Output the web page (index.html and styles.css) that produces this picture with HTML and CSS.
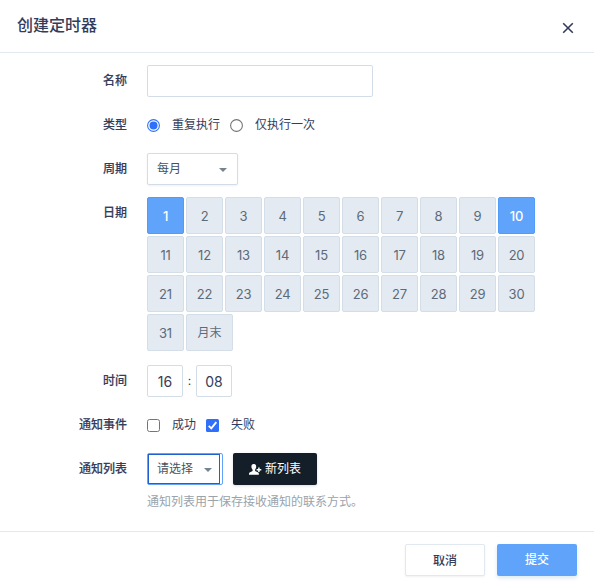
FILE: index.html
```html
<!DOCTYPE html>
<html lang="zh-CN">
<head>
<meta charset="utf-8">
<title>创建定时器</title>
<link rel="stylesheet" href="styles.css">
</head>
<body>
<div class="dialog">
  <header class="header">
    <h1 class="title">创建定时器</h1>
    <svg class="close" viewBox="0 0 12 12"><path d="M1.2 1.2 10.8 10.8M10.8 1.2 1.2 10.8" fill="none" stroke="#343c5b" stroke-width="1.6"/></svg>
  </header>
  <main class="form">
    <div class="row"><div class="label">名称</div><input class="name" type="text"></div>
    <div class="row">
      <div class="label">类型</div>
      <svg class="mark" viewBox="0 0 13 13"><circle cx="6.5" cy="6.5" r="5.9" fill="#fff" stroke="#2f73fb" stroke-width="1.1"/><circle cx="6.5" cy="6.5" r="4" fill="#2f6ffb"/></svg>
      <span class="option">重复执行</span>
      <svg class="mark" viewBox="0 0 13 13"><circle cx="6.5" cy="6.5" r="5.9" fill="#fff" stroke="#757575" stroke-width="1.1"/></svg>
      <span class="option">仅执行一次</span>
    </div>
    <div class="row">
      <div class="label">周期</div>
      <div class="select period"><span>每月</span><i class="caret"></i></div>
    </div>
    <div class="row dates">
      <div class="label">日期</div>
      <div class="days">
        <span class="day on">1</span><span class="day">2</span><span class="day">3</span><span class="day">4</span><span class="day">5</span><span class="day">6</span><span class="day">7</span><span class="day">8</span><span class="day">9</span><span class="day on">10</span>
        <span class="day">11</span><span class="day">12</span><span class="day">13</span><span class="day">14</span><span class="day">15</span><span class="day">16</span><span class="day">17</span><span class="day">18</span><span class="day">19</span><span class="day">20</span>
        <span class="day">21</span><span class="day">22</span><span class="day">23</span><span class="day">24</span><span class="day">25</span><span class="day">26</span><span class="day">27</span><span class="day">28</span><span class="day">29</span><span class="day">30</span>
        <span class="day">31</span><span class="day last">月末</span>
      </div>
    </div>
    <div class="row">
      <div class="label">时间</div>
      <span class="time">16</span><span class="colon">:</span><span class="time">08</span>
    </div>
    <div class="row">
      <div class="label">通知事件</div>
      <svg class="mark" viewBox="0 0 13 13"><rect x=".5" y=".5" width="12" height="12" rx="2" fill="#fff" stroke="#757575"/></svg>
      <span class="option">成功</span>
      <svg class="mark" viewBox="0 0 13 13"><rect width="13" height="13" rx="1.5" fill="#2f6ffb"/><path d="M2.7 6.8 5.3 9.4 10.3 3.2" fill="none" stroke="#fff" stroke-width="1.9"/></svg>
      <span class="option">失败</span>
    </div>
    <div class="row">
      <div class="label">通知列表</div>
      <div class="focus"><div class="select list"><span>请选择</span><i class="caret"></i></div></div>
      <button class="new"><svg class="user" viewBox="0 0 13 11"><path d="M4.6 0C6.5 0 7.3 1.2 7.2 3.1 7.1 4.4 6.6 5.1 6.1 5.7V7L9.2 8.4C9.8 8.8 9.9 9.5 9.9 10.7H0C0 9.5.1 8.8.7 8.4L3.6 7V5.7C3 5.1 2.5 4.4 2.4 3.1 2.3 1.2 3 0 4.6 0Z" fill="#fff"/><path d="M9.9 3.4V8M7.6 5.7H12.3" stroke="#fff" stroke-width="1.5"/></svg>新列表</button>
    </div>
    <p class="help">通知列表用于保存接收通知的联系方式。</p>
  </main>
  <footer class="footer">
    <button class="btn">取消</button>
    <button class="btn submit">提交</button>
  </footer>
</div>
</body>
</html>
```
FILE: styles.css
```css
* { box-sizing: border-box; }
body {
  margin: 0;
  background: #fff;
  color: #343c5b;
  font: 12px/18px Inter, "Noto Sans CJK SC", sans-serif;
}
button { font: inherit; }
.dialog { display: flex; flex-direction: column; height: 586px; }
.header {
  display: flex;
  justify-content: space-between;
  height: 53px;
  padding: 0 20px 0 17px;
  border-bottom: 1px solid #e1e8f0;
}
.title { margin: 13px 0 0; font-size: 16px; line-height: 24px; font-weight: 500; }
.close { width: 12px; height: 12px; margin-top: 22px; }
.form { flex: 1; padding-top: 12px; }
.row { display: flex; align-items: center; height: 32px; margin-bottom: 12px; }
.label {
  width: 127px;
  margin-right: 20px;
  text-align: right;
  font-weight: 500;
  -webkit-text-stroke: .15px #343c5b;
}
.name {
  width: 226px;
  height: 32px;
  border: 1px solid #d3dde7;
  border-radius: 2px;
  background: #fff;
}
.mark { width: 13px; height: 13px; margin-right: 12px; }
.option { margin-right: 10px; }
.select {
  display: flex;
  align-items: center;
  justify-content: space-between;
  height: 32px;
  padding: 0 10px 0 9px;
  border: 1px solid #d3dde7;
  border-radius: 2px;
  color: #46535f;
  background: #fff;
}
.period { width: 91px; box-shadow: 0 1px 2px rgba(60, 80, 110, .08); }
.caret {
  margin-top: 1px;
  border: 4px solid transparent;
  border-top-color: #75828f;
  border-bottom: 0;
}
.dates { align-items: flex-start; height: 154px; margin-bottom: 14px; }
.dates .label { padding-top: 7px; }
.days { display: flex; flex-wrap: wrap; gap: 2px; width: 388px; }
.day {
  display: flex;
  align-items: center;
  justify-content: center;
  width: 37px;
  height: 37px;
  border: 1px solid #d3dee8;
  border-radius: 2px;
  background: #e4eaf1;
  color: #5c6b79;
  font-size: 13px;
  letter-spacing: -.2px;
}
.on { background: #5fa3fa; border-color: #529bf8; color: #fff; font-weight: 500; }
.last { width: 47px; font-size: 12px; letter-spacing: 0; }
.time {
  width: 36px;
  height: 32px;
  border: 1px solid #d3dde7;
  border-radius: 2px;
  font-size: 14px;
  line-height: 31px;
  text-align: center;
}
.colon { width: 13px; text-align: center; }
.focus {
  width: 76px;
  height: 32px;
  border: 1px solid #61a4fa;
  border-radius: 2px;
}
.list {
  width: 72px;
  height: 30px;
  padding: 0 7px 0 8px;
  border: 1px solid #2160d0;
  border-radius: 0;
}
.new {
  display: flex;
  align-items: center;
  justify-content: center;
  width: 84px;
  height: 32px;
  margin-left: 10px;
  padding: 0;
  border: 0;
  border-radius: 2px;
  background: #141e29;
  color: #fff;
  box-shadow: 0 1px 3px rgba(20, 30, 41, .15);
}
.user { width: 13px; height: 11px; margin-right: 3px; }
.help { margin: -4px 0 0 147px; color: #9aa3ac; }
.footer {
  display: flex;
  justify-content: flex-end;
  gap: 12px;
  height: 55px;
  padding: 12px 17px 0;
  border-top: 1px solid #e1e8f0;
}
.btn {
  width: 80px;
  height: 32px;
  padding: 2px 0 0;
  border: 1px solid #e1e8f0;
  border-radius: 2px;
  background: #fff;
  color: #343c5b;
  font-weight: 500;
  box-shadow: 0 1px 2px rgba(60, 80, 110, .08);
}
.submit {
  padding: 0;
  border: 0;
  background: #5fa3fa;
  color: #fff;
  box-shadow: 0 2px 4px rgba(70, 140, 190, .2);
}
```
